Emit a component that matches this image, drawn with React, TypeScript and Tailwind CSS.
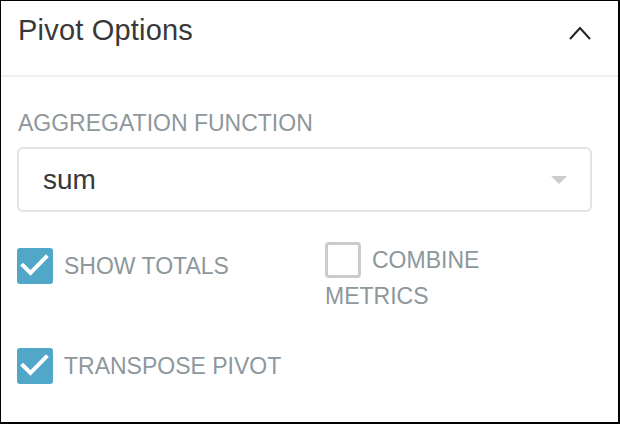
import React from "react";

function CheckIcon() {
  return (
    <svg viewBox="0 0 36 36" className="w-9 h-9">
      <path d="M6 17.5 L13.5 25 L29 9" fill="none" stroke="white" strokeWidth="4" strokeLinecap="square" />
    </svg>
  );
}

function Checkbox({ checked }: { checked: boolean }) {
  return checked ? (
    <span className="inline-block align-top w-9 h-9 rounded-[3px] bg-[#50a7c7] mr-[11px]">
      <CheckIcon />
    </span>
  ) : (
    <span className="inline-block align-top w-9 h-9 rounded-[4px] border-[3px] border-[#cbcbcb] bg-white mr-[11px]" />
  );
}

function Option({ label, checked }: { label: string; checked: boolean }) {
  return (
    <label className="block text-[23px] leading-[36px] text-[#8d979c] uppercase">
      <Checkbox checked={checked} />
      {label}
    </label>
  );
}

export default function App() {
  return (
    <div className="w-[620px] h-[424px] bg-white border-l border-t border-r-2 border-b-2 border-black font-['Liberation_Sans',Arial,sans-serif]">
      {/* Header */}
      <div className="h-[76px] border-b-2 border-[#efefef] pl-[17px] pr-[27px] pt-[11px] flex items-start justify-between">
        <span className="text-[29px] leading-[36px] text-[#383838] tracking-[0.2px]">Pivot Options</span>
        <svg viewBox="0 0 22 14" className="w-[22px] h-[14px] mt-[14px]">
          <polyline points="1,13 11,2 21,13" fill="none" stroke="#222222" strokeWidth="2" />
        </svg>
      </div>

      {/* Body */}
      <div className="pl-[16px] pt-[32px]">
        <div className="text-[23px] leading-[28px] text-[#8d979c] mb-[10px] pl-px">AGGREGATION FUNCTION</div>
        <div className="w-[575px] h-[65px] border-2 border-[#e3e3e3] rounded-md flex items-center justify-between pl-[24px] pr-[23px]">
          <span className="text-[28px] text-[#383838]">sum</span>
          <svg viewBox="0 0 16 8" className="w-4 h-2">
            <polygon points="0,0 16,0 8,8" fill="#cccccc" />
          </svg>
        </div>

        <div className="grid grid-cols-[308px_200px] gap-y-[28px] mt-[30px]">
          <div className="pt-[6px]">
            <Option label="Show Totals" checked />
          </div>
          <div>
            <Option label="Combine Metrics" checked={false} />
          </div>
          <div className="pt-[6px]">
            <Option label="Transpose Pivot" checked />
          </div>
        </div>
      </div>
    </div>
  );
}
